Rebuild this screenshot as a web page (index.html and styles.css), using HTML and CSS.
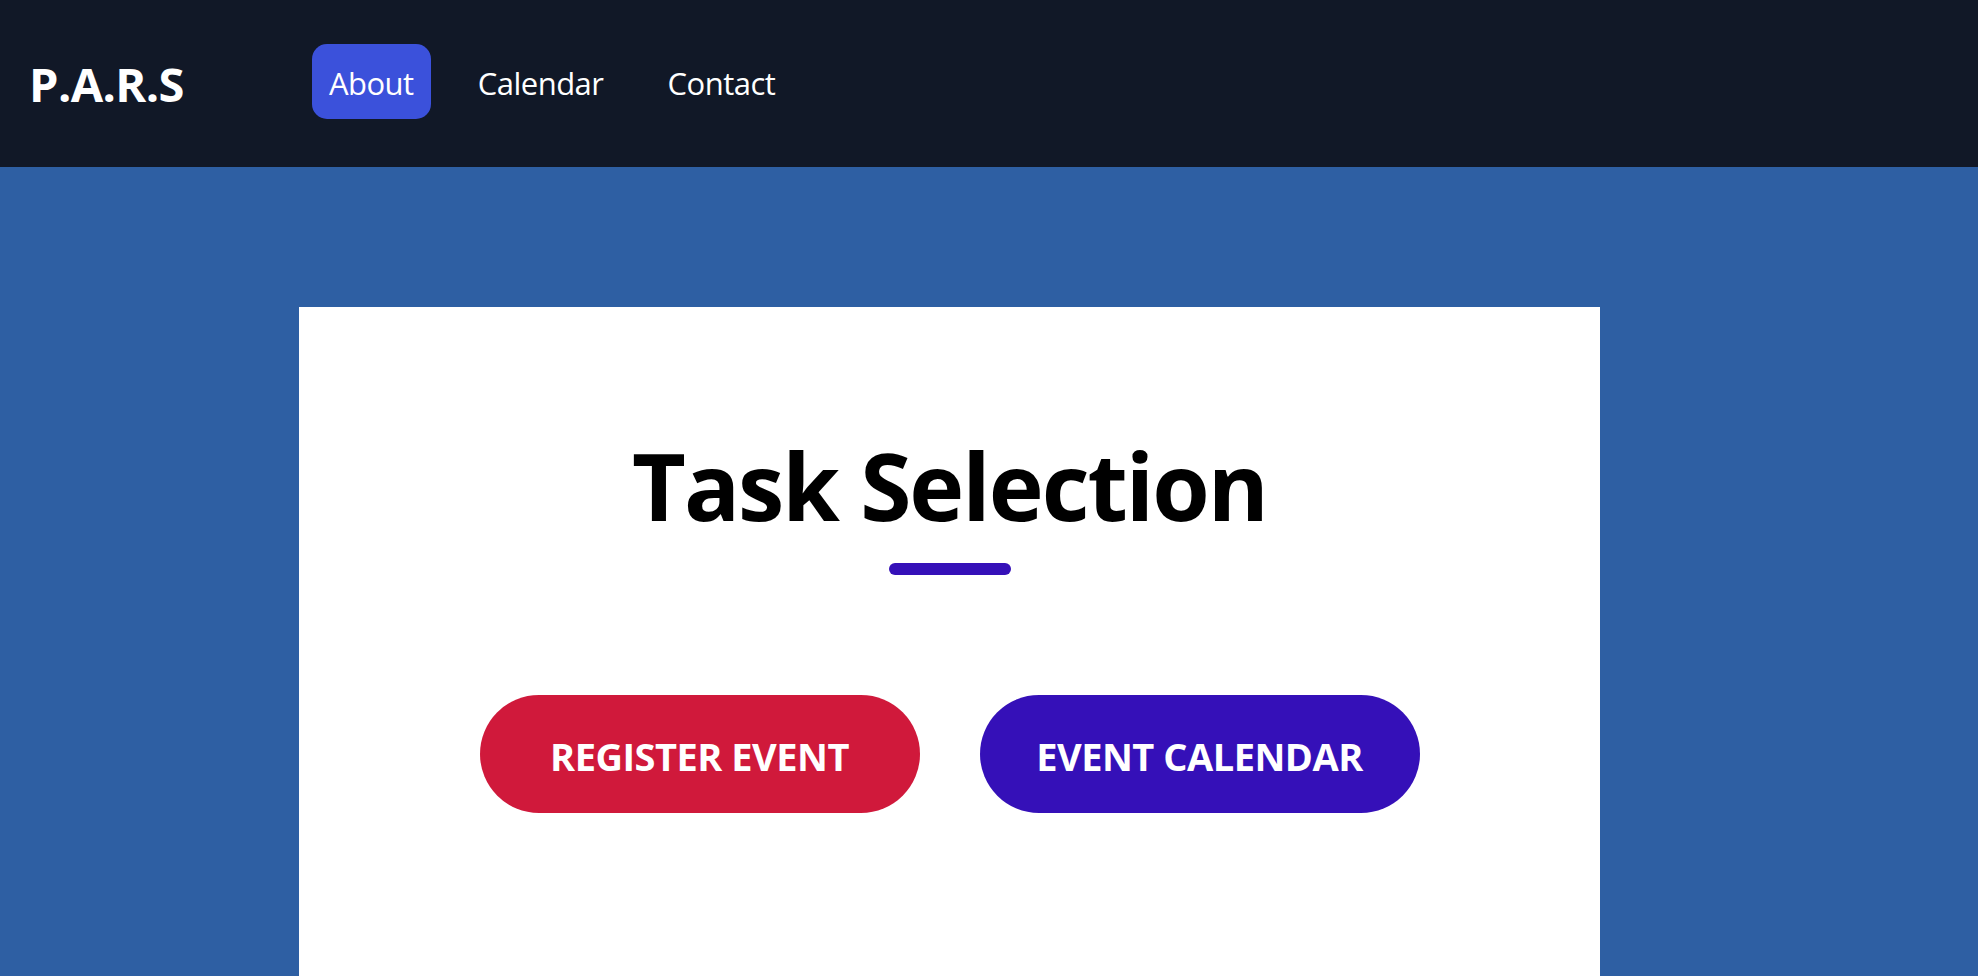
FILE: index.html
```html
<!DOCTYPE html>
<html lang="en">
<head>
<meta charset="utf-8">
<title>P.A.R.S</title>
<link rel="stylesheet" href="styles.css">
</head>
<body>
<header class="navbar">
  <div class="brand">P.A.R.S</div>
  <nav class="nav-links">
    <a class="nav-link active" href="#">About</a>
    <a class="nav-link" href="#">Calendar</a>
    <a class="nav-link" href="#">Contact</a>
  </nav>
</header>
<main class="page">
  <section class="card">
    <h1 class="title">Task Selection</h1>
    <div class="title-bar"></div>
    <div class="actions">
      <a class="btn btn-red" href="#">REGISTER EVENT</a>
      <a class="btn btn-purple" href="#">EVENT CALENDAR</a>
    </div>
  </section>
</main>
</body>
</html>
```
FILE: styles.css
```css
* { box-sizing: border-box; }
html, body { margin: 0; padding: 0; overflow: hidden; }
body {
  font-family: "Open Sans", "Noto Sans", sans-serif;
  background: #2e5fa3;
  height: 100vh;
  display: flex;
  flex-direction: column;
}
.navbar {
  height: 167px;
  flex: 0 0 167px;
  background: #111827;
  display: flex;
  align-items: center;
  padding-left: 29px;
}
.brand {
  color: #fff;
  font-weight: 700;
  font-size: 47px;
  letter-spacing: -0.6px;
  line-height: 1;
  margin-top: 2px;
  margin-right: 128px;
}
.nav-links {
  display: flex;
  gap: 30px;
  margin-bottom: 4px;
}
.nav-link {
  color: #fff;
  text-decoration: none;
  font-size: 31px;
  letter-spacing: -0.5px;
  line-height: 72px;
  padding: 3px 17px 0;
  border-radius: 15px;
}
.nav-link.active { background: #3b51db; }
.page {
  flex: 1;
  display: flex;
  padding-top: 140px;
  padding-left: 299px;
}
.card {
  width: 1301px;
  background: #fff;
  display: flex;
  flex-direction: column;
  align-items: center;
  padding-top: 132px;
}
.title {
  margin: 0;
  font-size: 93px;
  font-weight: 700;
  line-height: 1;
  letter-spacing: -2px;
  color: #000;
}
.title-bar {
  width: 122px;
  height: 12px;
  border-radius: 6px;
  background: #3510b8;
  margin-top: 31px;
}
.actions {
  display: flex;
  gap: 60px;
  margin-top: 120px;
}
.btn {
  width: 440px;
  height: 118px;
  border-radius: 59px;
  display: flex;
  align-items: center;
  justify-content: center;
  padding-top: 3px;
  color: #fff;
  text-decoration: none;
  font-weight: 700;
  font-size: 38px;
  letter-spacing: -0.5px;
  line-height: 1;
}
.btn-red { background: #d0193b; }
.btn-purple { background: #3510b8; }
```
